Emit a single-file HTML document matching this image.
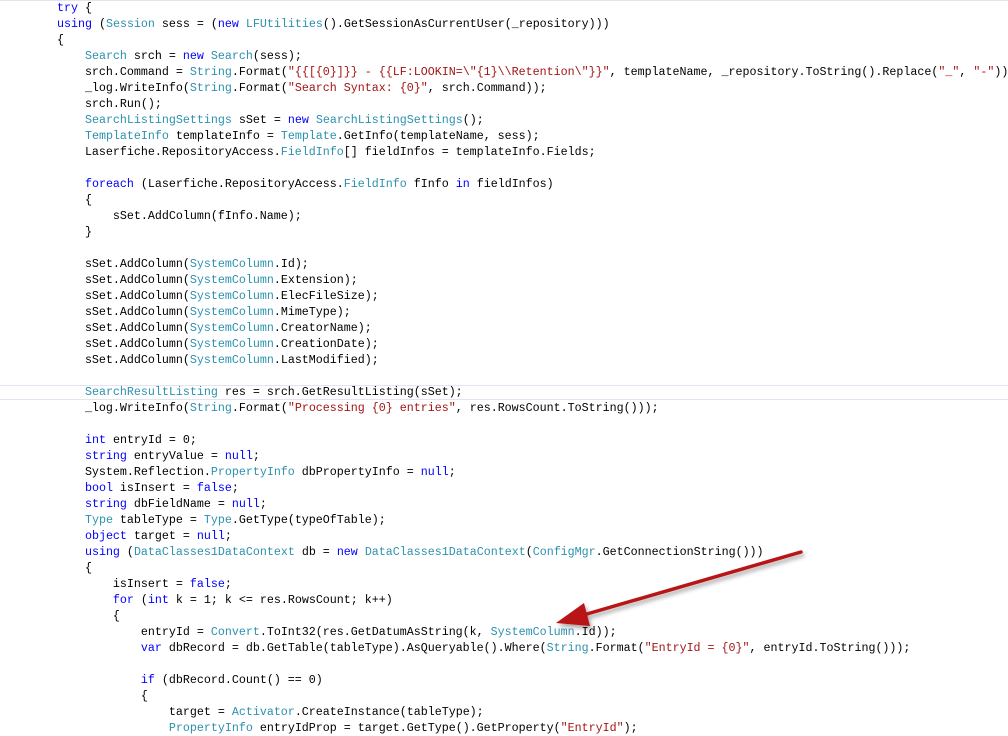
<!DOCTYPE html>
<html><head><meta charset="utf-8"><style>
html,body{margin:0;padding:0;background:#fff;width:1008px;height:732px;overflow:hidden}
#c{position:absolute;left:1px;top:0;font-family:"Liberation Mono",monospace;font-size:11.67px;line-height:16px;color:#000;white-space:pre}
.k{color:#0000ff}.t{color:#2b91af}.s{color:#a31515}
.hl{position:absolute;left:0;width:1008px;height:1px;background:#e4e4ee}
</style></head><body>
<div class="hl" style="top:0"></div>
<div class="hl" style="top:385px"></div>
<div class="hl" style="top:399px"></div>
<div id="c">        <span class="k">try</span> {
        <span class="k">using</span> (<span class="t">Session</span> sess = (<span class="k">new</span> <span class="t">LFUtilities</span>().GetSessionAsCurrentUser(_repository)))
        {
            <span class="t">Search</span> srch = <span class="k">new</span> <span class="t">Search</span>(sess);
            srch.Command = <span class="t">String</span>.Format(<span class="s">"{{[{0}]}} - {{LF:LOOKIN=\"{1}\\Retention\"}}"</span>, templateName, _repository.ToString().Replace(<span class="s">"_"</span>, <span class="s">"-"</span>));
            _log.WriteInfo(<span class="t">String</span>.Format(<span class="s">"Search Syntax: {0}"</span>, srch.Command));
            srch.Run();
            <span class="t">SearchListingSettings</span> sSet = <span class="k">new</span> <span class="t">SearchListingSettings</span>();
            <span class="t">TemplateInfo</span> templateInfo = <span class="t">Template</span>.GetInfo(templateName, sess);
            Laserfiche.RepositoryAccess.<span class="t">FieldInfo</span>[] fieldInfos = templateInfo.Fields;

            <span class="k">foreach</span> (Laserfiche.RepositoryAccess.<span class="t">FieldInfo</span> fInfo <span class="k">in</span> fieldInfos)
            {
                sSet.AddColumn(fInfo.Name);
            }

            sSet.AddColumn(<span class="t">SystemColumn</span>.Id);
            sSet.AddColumn(<span class="t">SystemColumn</span>.Extension);
            sSet.AddColumn(<span class="t">SystemColumn</span>.ElecFileSize);
            sSet.AddColumn(<span class="t">SystemColumn</span>.MimeType);
            sSet.AddColumn(<span class="t">SystemColumn</span>.CreatorName);
            sSet.AddColumn(<span class="t">SystemColumn</span>.CreationDate);
            sSet.AddColumn(<span class="t">SystemColumn</span>.LastModified);

            <span class="t">SearchResultListing</span> res = srch.GetResultListing(sSet);
            _log.WriteInfo(<span class="t">String</span>.Format(<span class="s">"Processing {0} entries"</span>, res.RowsCount.ToString()));

            <span class="k">int</span> entryId = 0;
            <span class="k">string</span> entryValue = <span class="k">null</span>;
            System.Reflection.<span class="t">PropertyInfo</span> dbPropertyInfo = <span class="k">null</span>;
            <span class="k">bool</span> isInsert = <span class="k">false</span>;
            <span class="k">string</span> dbFieldName = <span class="k">null</span>;
            <span class="t">Type</span> tableType = <span class="t">Type</span>.GetType(typeOfTable);
            <span class="k">object</span> target = <span class="k">null</span>;
            <span class="k">using</span> (<span class="t">DataClasses1DataContext</span> db = <span class="k">new</span> <span class="t">DataClasses1DataContext</span>(<span class="t">ConfigMgr</span>.GetConnectionString()))
            {
                isInsert = <span class="k">false</span>;
                <span class="k">for</span> (<span class="k">int</span> k = 1; k &lt;= res.RowsCount; k++)
                {
                    entryId = <span class="t">Convert</span>.ToInt32(res.GetDatumAsString(k, <span class="t">SystemColumn</span>.Id));
                    <span class="k">var</span> dbRecord = db.GetTable(tableType).AsQueryable().Where(<span class="t">String</span>.Format(<span class="s">"EntryId = {0}"</span>, entryId.ToString()));

                    <span class="k">if</span> (dbRecord.Count() == 0)
                    {
                        target = <span class="t">Activator</span>.CreateInstance(tableType);
                        <span class="t">PropertyInfo</span> entryIdProp = target.GetType().GetProperty(<span class="s">"EntryId"</span>);
</div>
<svg width="1008" height="732" style="position:absolute;left:0;top:0">
<defs><filter id="sh" x="-20%" y="-20%" width="140%" height="140%"><feDropShadow dx="2" dy="3" stdDeviation="2" flood-color="#000" flood-opacity="0.35"/></filter></defs>
<g filter="url(#sh)">
<line x1="801" y1="552" x2="580" y2="616" stroke="#b81414" stroke-width="3.5" stroke-linecap="round"/>
<polygon points="556,623 584,603 590,626" fill="#b81414"/>
</g>
</svg>
</body></html>
